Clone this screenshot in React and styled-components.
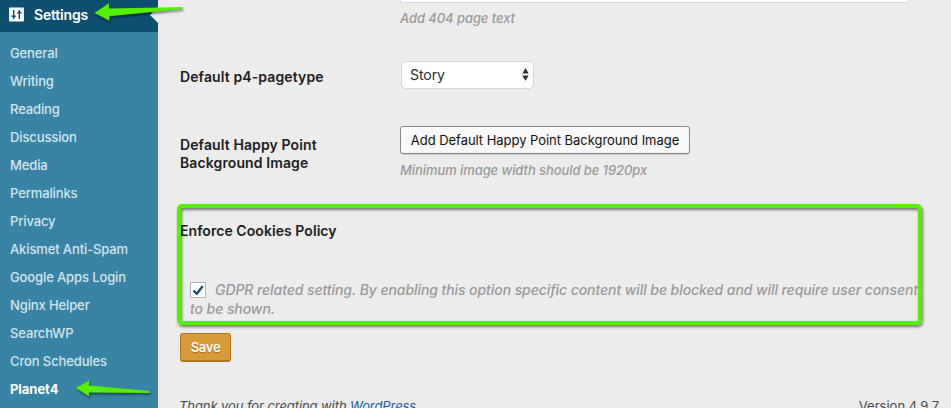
import React from 'react';
import styled, { createGlobalStyle } from 'styled-components';

const GlobalStyle = createGlobalStyle`
  * { box-sizing: border-box; }
  body {
    margin: 0;
    background: #ececec;
    font-family: Inter, "Liberation Sans", sans-serif;
    overflow: hidden;
  }
`;

const Page = styled.div`
  position: relative;
  display: flex;
  width: 951px;
  height: 408px;
  overflow: hidden;
  background: #ececec;
`;

const Sidebar = styled.nav`
  width: 158px;
  flex: none;
  background: #3983a5;
`;

const CurrentMenu = styled.div`
  position: relative;
  display: flex;
  align-items: center;
  gap: 10px;
  height: 32px;
  padding: 0 0 3px 9px;
  background: #0f5070;
  color: #fff;
  font-size: 14px;
  line-height: 17px;
  font-weight: 600;
  letter-spacing: -0.18px;

  &::after {
    content: '';
    position: absolute;
    right: 0;
    top: 7px;
    border: 8px solid transparent;
    border-left: 0;
    border-right-color: #ececec;
  }
`;

const SubMenu = styled.ul`
  list-style: none;
  margin: 0;
  padding: 7px 0 0 10px;
`;

const SubItem = styled.li`
  height: 28px;
  line-height: 28px;
  font-size: 13px;
  font-weight: ${(p) => (p.$active ? 700 : 500)};
  letter-spacing: ${(p) => (p.$active ? '-0.05px' : '-0.12px')};
  color: ${(p) => (p.$active ? '#fff' : '#d5e5ed')};
  white-space: nowrap;
`;

const Main = styled.main`
  flex: 1;
  display: flex;
  flex-direction: column;
  padding-left: 22px;

  > * {
    flex: none;
  }
`;

const Row = styled.div`
  display: grid;
  grid-template-columns: 220px 1fr;
  height: ${(p) => p.$height}px;
`;

const Label = styled.div`
  padding-top: ${(p) => p.$top || 0}px;
  width: 165px;
  line-height: 18px;
  font-size: 14px;
  font-weight: 600;
  letter-spacing: ${(p) => p.$spacing || 0.11}px;
  color: #1d2023;
  white-space: nowrap;
`;

const TextAreaEnd = styled.div`
  width: 509px;
  height: 3px;
  background: #fff;
  border: 1px solid #dadada;
  border-top: 0;
`;

const Hint = styled.p`
  margin: ${(p) => p.$top}px 0 0;
  font-size: 13px;
  line-height: 18px;
  font-style: italic;
  font-weight: 500;
  letter-spacing: -0.08px;
  color: #999;
`;

const Select = styled.div`
  display: flex;
  align-items: center;
  justify-content: space-between;
  width: 133px;
  height: 28px;
  margin-left: 1px;
  padding: 0 4px 1px 8px;
  border: 1px solid #d6d6d6;
  border-radius: 5px;
  background: #fff;
  color: #2a2d30;
  font-size: 14px;
  line-height: 17px;
  letter-spacing: -0.05px;
`;

const PlainButton = styled.button`
  display: block;
  width: 290px;
  height: 28px;
  padding: 0;
  border: 1px solid #868686;
  border-radius: 3px;
  background: #f9f9f9;
  box-shadow: 0 1px 0 #d0d0d0;
  color: #111;
  font: 400 13px Inter, sans-serif;
  letter-spacing: -0.04px;
  white-space: nowrap;
`;

const CookieSection = styled.section`
  position: relative;
  height: 129px;
  padding-top: 18px;
`;

const Highlight = styled.div`
  position: absolute;
  left: -3px;
  top: 0;
  width: 745px;
  height: 121px;
  border: 4px solid #55f000;
  border-radius: 5px;
  box-shadow: 1px 2px 3px rgba(0, 0, 0, 0.5), inset 1px 2px 3px rgba(0, 0, 0, 0.5);
`;

const Setting = styled.label`
  position: relative;
  display: block;
  margin: 40px 0 0 10px;
  font-size: 14px;
  line-height: 19px;
  font-style: italic;
  font-weight: 500;
  letter-spacing: -0.075px;
  color: #999;
  white-space: nowrap;
`;

const Check = styled.span`
  display: inline-flex;
  width: 16px;
  height: 16px;
  margin-right: 9px;
  vertical-align: -2px;
  border: 1px solid #aeb4b9;
  background: #fff;
`;

const SaveButton = styled.button`
  align-self: flex-start;
  width: 51px;
  height: 29px;
  padding: 0 0 1px;
  border: 1px solid #b1761c;
  border-bottom-width: 2px;
  border-radius: 3px;
  background: #d99a38;
  color: #fff;
  font: 600 13px Inter, sans-serif;
  letter-spacing: -0.3px;
  text-shadow: 0 1px 1px #a56b15;
`;

const Footer = styled.footer`
  display: flex;
  justify-content: space-between;
  margin: 35px 12px 0 -1px;
  font-size: 13px;
  line-height: 18px;
  color: #484b4e;
`;

const Thanks = styled.em`
  letter-spacing: -0.08px;
`;

const Link = styled.span`
  color: #1c5fa0;
`;

const Arrows = styled.svg`
  position: absolute;
  left: 0;
  top: 0;
  filter: drop-shadow(1px 2px 1px rgba(0, 0, 0, 0.45));
`;

const items = [
  'General', 'Writing', 'Reading', 'Discussion', 'Media', 'Permalinks', 'Privacy',
  'Akismet Anti-Spam', 'Google Apps Login', 'Nginx Helper', 'SearchWP', 'Cron Schedules', 'Planet4',
];

const SettingsIcon = () => (
  <svg width="15" height="15" viewBox="0 0 15 15">
    <rect y="0.5" width="15" height="14" rx="1" fill="#fff" />
    <path d="M4.7 3v9M10.3 3v9" stroke="#0f5070" strokeWidth="1.4" />
    <path d="M2.3 8.6h4.8v1.2H6l-.5 1H3.9l-.5-1H2.3zM7.9 6.4h4.8V5.2h-1.1l-.5-1H9.5l-.5 1H7.9z" fill="#0f5070" />
  </svg>
);

export default function App() {
  return (
    <>
      <GlobalStyle />
      <Page>
        <Sidebar>
          <CurrentMenu><SettingsIcon />Settings</CurrentMenu>
          <SubMenu>
            {items.map((name) => (
              <SubItem key={name} $active={name === 'Planet4'}>{name}</SubItem>
            ))}
          </SubMenu>
        </Sidebar>
        <Main>
          <Row $height={61}>
            <span />
            <div>
              <TextAreaEnd />
              <Hint $top={6}>Add 404 page text</Hint>
            </div>
          </Row>
          <Row $height={65}>
            <Label $top={7}>Default p4-pagetype</Label>
            <Select>
              Story
              <svg width="7" height="13" viewBox="0 0 7 13">
                <path d="M3.5 0L6.7 5.4H.3zM.3 7.4h6.4L3.5 12.8z" fill="#2d3033" />
              </svg>
            </Select>
          </Row>
          <Row $height={78}>
            <Label $top={10}>Default Happy Point<br />Background Image</Label>
            <div>
              <PlainButton>Add Default Happy Point Background Image</PlainButton>
              <Hint $top={7}>Minimum image width should be 1920px</Hint>
            </div>
          </Row>
          <CookieSection>
            <Highlight />
            <Label as="div" $spacing={0.06}>Enforce Cookies Policy</Label>
            <Setting>
              <Check>
                <svg width="14" height="14" viewBox="0 0 14 14">
                  <path d="M2.5 7.5l3.3 3.3L11.8 3" fill="none" stroke="#12506f" strokeWidth="2.3" />
                </svg>
              </Check>
              GDPR related setting. By enabling this option specific content will be blocked and will require user consent
              <br />
              to be shown.
            </Setting>
          </CookieSection>
          <SaveButton>Save</SaveButton>
          <Footer>
            <Thanks>Thank you for creating with <Link>WordPress</Link></Thanks>
            <span>Version 4.9.7</span>
          </Footer>
        </Main>
        <Arrows width="200" height="408" viewBox="0 0 200 408">
          <path d="M94.5 13L109 3.3V8.5L182.5 7V9L109.3 16.3V20.8z" fill="#55f000" />
          <path d="M75.8 388L89.3 380.5L88.8 385.5L149.5 391V393L88.8 392.5L89.3 396.5z" fill="#55f000" />
        </Arrows>
      </Page>
    </>
  );
}
